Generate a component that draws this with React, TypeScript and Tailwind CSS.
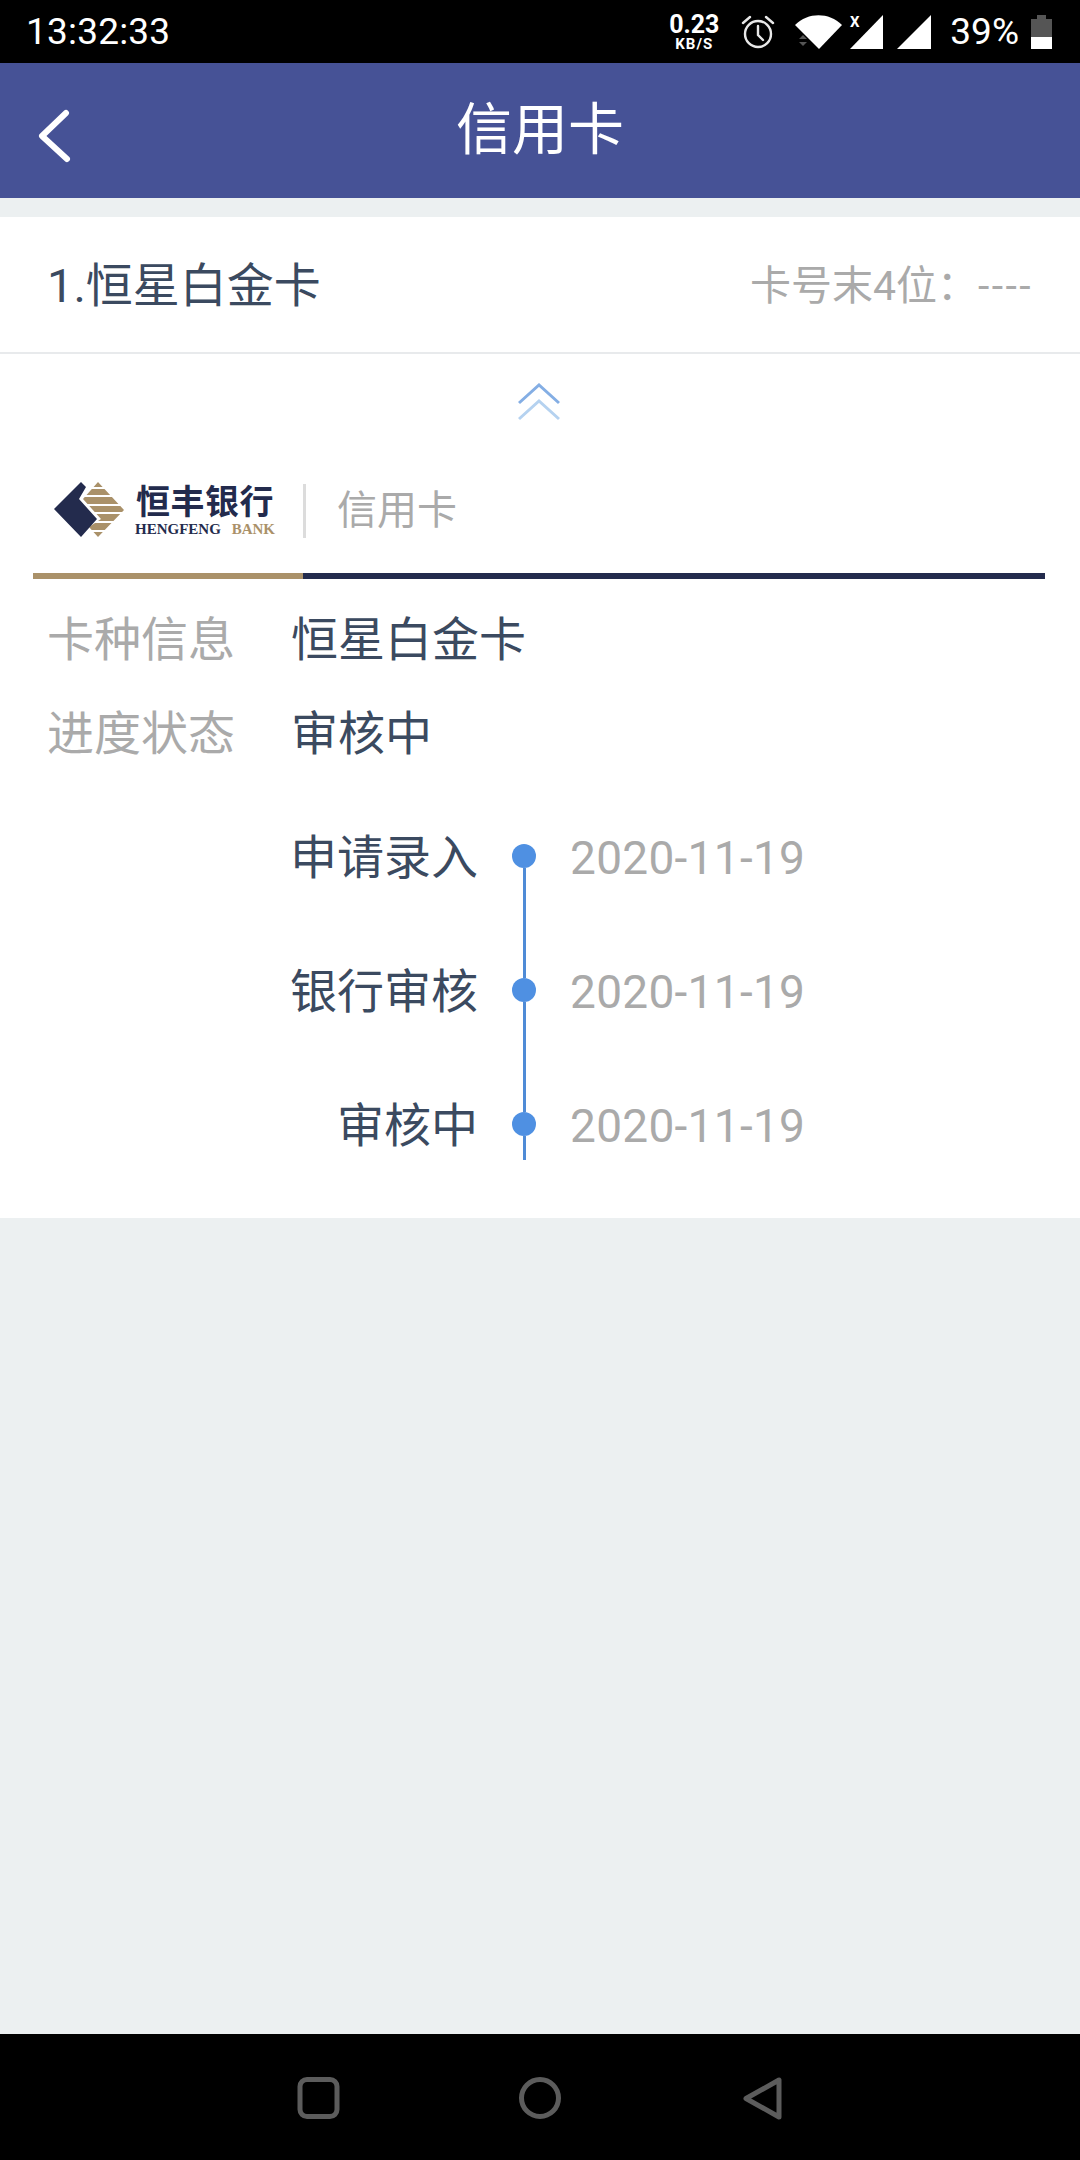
import { FC } from "react";

const cjk = "font-['Roboto','Noto_Sans_CJK_SC',sans-serif]";

const steps = [
  { label: "申请录入", date: "2020-11-19" },
  { label: "银行审核", date: "2020-11-19" },
  { label: "审核中", date: "2020-11-19" },
];

const StatusBar: FC = () => (
  <div className="h-[63px] bg-black flex items-center pl-[26px] text-white">
    <span className="text-[37px] leading-none tracking-[0.2px]">13:32:33</span>
    <div className="ml-auto flex items-center">
      <div className="w-[52px] flex flex-col items-center font-bold leading-none">
        <span className="text-[25px] leading-[25px]">0.23</span>
        <span className="text-[15px] leading-[14px] tracking-[1px]">KB/S</span>
      </div>
      <svg className="ml-[20px]" width="36" height="36" viewBox="0 0 36 36" fill="none" stroke="#e8e8e8" strokeWidth="2.4" strokeLinecap="round">
        <circle cx="18" cy="20" r="13" />
        <path d="M18 12v9l5 5M3 9l7-6M33 9l-7-6" />
      </svg>
      <svg className="ml-[19px]" width="92" height="36" viewBox="0 0 92 36">
        <path d="M0 12C13 -1 34 -1 47 12L24 36Z" fill="#fff" transform="translate(0 -1)" />
        <path d="M4 25l4-4 4 4zM4 28l4 4 4-4z" fill="#555" />
        <text x="55" y="13" fontSize="15" fontWeight="700" fill="#fff" fontFamily="Roboto, sans-serif">X</text>
        <path d="M55 35L88 1V35Z" fill="#fff" />
      </svg>
      <svg className="ml-[9px]" width="36" height="36" viewBox="0 0 36 36">
        <path d="M1 35L35 1V35Z" fill="#fff" />
      </svg>
      <span className="ml-[18px] text-[37px] leading-none">39%</span>
      <svg className="ml-[12px] mr-[28px]" width="21" height="36" viewBox="0 0 21 36">
        <path d="M0 5h6V1h9v4h6v18H0Z" fill="#555" />
        <path d="M0 23h21v12H0Z" fill="#fff" />
      </svg>
    </div>
  </div>
);

const Header: FC = () => (
  <div className="relative h-[135px] bg-[#465296] flex items-center justify-center">
    <svg className="absolute left-[38px] top-[46px]" width="34" height="54" viewBox="0 0 34 54" fill="none" stroke="#fff" strokeWidth="6" strokeLinecap="round" strokeLinejoin="round">
      <path d="M28 4L4 27l25 23" />
    </svg>
    <h1 className="text-white text-[56px] leading-none -mt-[2px]">信用卡</h1>
  </div>
);

const BankLogo: FC = () => (
  <div className="flex items-center h-[58px]">
    <svg width="72" height="58" viewBox="0 0 72 58">
      <path d="M44 0L70 28L44 55L35 45L47 37L29 17Z" fill="#aa9169" />
      <path d="M28 6H60M28 14H66M28 23H70M28 31H70M30 40H66M30 49H60" stroke="#fff" strokeWidth="2" />
      <path d="M0 27L27 0L32 5L25 17L43 37L27 55Z" fill="#232b4d" />
    </svg>
    <div className="ml-[9px] w-[140px] flex flex-col items-center">
      <span className="text-[34px] leading-[35px] font-bold text-[#232b4d] tracking-[0.5px] whitespace-nowrap">恒丰银行</span>
      <span className="font-['Liberation_Serif',serif] font-bold text-[15px] leading-[18px] whitespace-nowrap text-[#232b4d]">
        HENGFENG <span className="ml-[7px] text-[#aa9169]">BANK</span>
      </span>
    </div>
    <div className="ml-[28px] w-[3px] h-[54px] bg-[#dcdcdc]" />
    <span className="ml-[31px] text-[40px] leading-none text-[#aaaaaa]">信用卡</span>
  </div>
);

const TimelineRow: FC<{ label: string; date: string; last: boolean }> = ({ label, date, last }) => (
  <div className={`flex ${last ? "h-[48px]" : "h-[134px]"}`}>
    <div className="w-[431px] text-right text-[47px] leading-[47px] text-[#3b4a60] -mt-[10px] whitespace-nowrap">{label}</div>
    <div className="ml-[34px] w-[24px] flex flex-col items-center">
      <div className="w-[24px] h-[24px] rounded-full bg-[#4f90e2] shrink-0" />
      <div className="w-[3px] flex-1 bg-[#4f8bd6]" />
    </div>
    <div className="ml-[34px] text-[46px] leading-[46px] tracking-[0.3px] text-[#aaaaaa] -mt-[9px]">{date}</div>
  </div>
);

const App: FC = () => {
  return (
    <div className={`w-[1080px] h-[2160px] bg-[#ecf0f1] flex flex-col ${cjk}`}>
      <StatusBar />
      <Header />

      <div className="mt-[19px] h-[137px] bg-white border-b-2 border-[#e8eaec] flex items-center justify-between pl-[47px] pr-[47px]">
        <span className="text-[47px] leading-none text-[#3b4a60] mt-[2px]">1.恒星白金卡</span>
        <span className="text-[41px] leading-none text-[#aaaaaa] mt-[3px]">
          卡号末4位：<span className="tracking-[2.4px]">----</span>
        </span>
      </div>

      <div className="h-[864px] bg-white flex flex-col">
        <div className="flex justify-center pt-[29px] pr-[2px]">
          <svg width="42" height="38" viewBox="0 0 42 38" fill="none" strokeWidth="3">
            <path d="M1 20L21 2l20 18" stroke="#84aee4" />
            <path d="M1 36l20-18 20 18" stroke="#b5d2f0" />
          </svg>
        </div>
        <div className="mt-[61px] pl-[54px]">
          <BankLogo />
        </div>
        <div className="mt-[33px] ml-[33px] mr-[35px] h-[6px] flex">
          <div className="w-[270px] bg-[#aa9169]" />
          <div className="flex-1 bg-[#232b4d]" />
        </div>

        <div className="mt-[37px] pl-[47px] flex items-center h-[46px] text-[47px] leading-none">
          <span className="w-[244px] text-[#aaaaaa]">卡种信息</span>
          <span className="text-[#3b4a60]">恒星白金卡</span>
        </div>
        <div className="mt-[48px] pl-[47px] flex items-center h-[46px] text-[47px] leading-none">
          <span className="w-[244px] text-[#aaaaaa]">进度状态</span>
          <span className="text-[#3b4a60]">审核中</span>
        </div>

        <div className="mt-[88px] pl-[47px] flex flex-col">
          {steps.map((s, i) => (
            <TimelineRow key={s.label} label={s.label} date={s.date} last={i === steps.length - 1} />
          ))}
        </div>
      </div>

      <div className="mt-auto h-[126px] bg-black relative">
        <svg className="absolute left-[296px] top-[43px]" width="490" height="44" viewBox="0 0 490 44" fill="none" stroke="#5c5c5c" strokeWidth="5" strokeLinejoin="round">
          <rect x="4" y="2.5" width="37" height="37" rx="7" />
          <circle cx="244" cy="21" r="18.5" />
          <path d="M483 3v37L450 21.5Z" />
        </svg>
      </div>
    </div>
  );
};

export default App;
